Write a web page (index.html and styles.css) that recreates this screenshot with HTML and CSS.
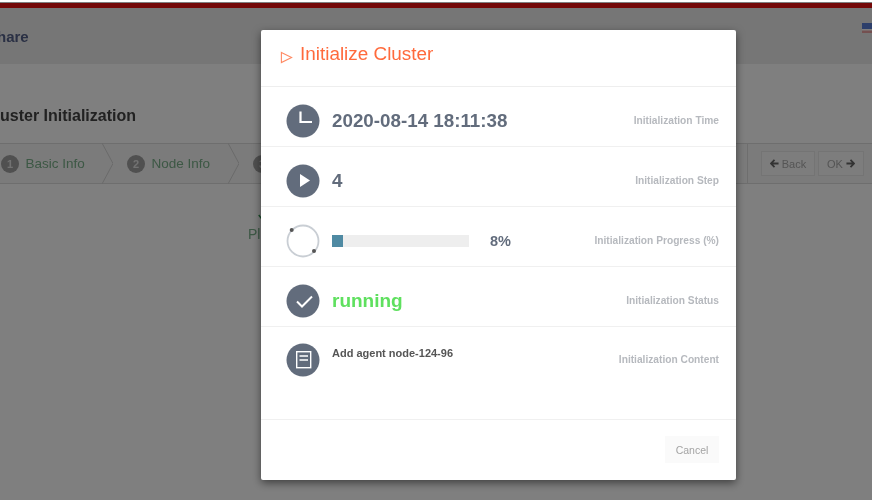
FILE: index.html
```html
<!DOCTYPE html>
<html lang="en">
<head>
  <meta charset="UTF-8" />
  <title>Cluster Initialization</title>
  <link rel="stylesheet" href="styles.css">
</head>
<body>
<div class="page">
  <div class="redbar"></div>
  <header class="topbar">
    <span class="brand">Share</span>
    <svg class="flag" viewBox="0 0 10 10"><rect width="10" height="10" fill="#e8a0a0"/><rect y="6" width="10" height="1.5" fill="#fff"/><rect width="10" height="6" fill="#5b7fd6"/></svg>
  </header>
  <main class="content">
    <h1 class="page-title">Cluster Initialization</h1>
    <div class="wizard">
      <div class="steps">
        <div class="step"><span class="num">1</span>Basic Info<svg class="chevron" viewBox="0 0 11 41"><path d="M0 0 L11 20.5 L0 41" fill="none" stroke="#d4d4d4"/></svg></div>
        <div class="step"><span class="num">2</span>Node Info<svg class="chevron" viewBox="0 0 11 41"><path d="M0 0 L11 20.5 L0 41" fill="none" stroke="#d4d4d4"/></svg></div>
        <div class="step"><span class="num">3</span>Plan</div>
      </div>
      <div class="wizard-actions">
        <button class="btn btn-back"><svg class="arrow" viewBox="0 0 10 10"><path d="M5 1 L1 5 L5 9 M1.5 5 H9.5" fill="none" stroke="#666" stroke-width="2"/></svg>Back</button>
        <button class="btn btn-ok">OK<svg class="arrow" viewBox="0 0 10 10"><path d="M5 1 L9 5 L5 9 M8.5 5 H0.5" fill="none" stroke="#666" stroke-width="2"/></svg></button>
      </div>
    </div>
    <div class="plan">
      <svg class="plan-tick" viewBox="0 0 8 6"><path d="M1 1 L4 5 L7 1" fill="none" stroke="#2f9a4f" stroke-width="1.8"/></svg>
      <div>Plan</div>
    </div>
  </main>
</div>

<div class="overlay"></div>

<div class="modal">
  <div class="modal-head">
    <svg class="head-icon" viewBox="0 0 14 14"><path d="M1.5 1.5 L12.5 7 L1.5 12.5 Z" fill="none" stroke="#ff8a64" stroke-width="1.2"/></svg>
    <span>Initialize Cluster</span>
  </div>

  <div class="row">
    <svg class="icon" viewBox="0 0 34 34"><circle cx="17" cy="17" r="16.5" fill="#626c7c"/><path d="M14.5 7.5 V18 H26" fill="none" stroke="#fff" stroke-width="2.2"/></svg>
    <div class="value">2020-08-14 18:11:38</div>
    <div class="label">Initialization Time</div>
  </div>
  <div class="row">
    <svg class="icon" viewBox="0 0 34 34"><circle cx="17" cy="17" r="16.5" fill="#626c7c"/><path d="M14 10 L24 16.5 L14 23 Z" fill="#fff"/></svg>
    <div class="value">4</div>
    <div class="label">Initialization Step</div>
  </div>
  <div class="row">
    <svg class="icon" viewBox="0 0 34 34"><circle cx="17" cy="17" r="15.5" fill="none" stroke="#c9ced4" stroke-width="1.8"/><circle cx="5.7" cy="6" r="2" fill="#555"/><circle cx="28" cy="27" r="2" fill="#555"/></svg>
    <div class="progress"><div class="progress-fill" style="width: 8%"></div></div>
    <div class="percent">8%</div>
    <div class="label">Initialization Progress (%)</div>
  </div>
  <div class="row">
    <svg class="icon" viewBox="0 0 34 34"><circle cx="17" cy="17" r="16.5" fill="#626c7c"/><path d="M11 17.5 L16 22.5 L26 12.5" fill="none" stroke="#fff" stroke-width="2"/></svg>
    <div class="value running">running</div>
    <div class="label">Initialization Status</div>
  </div>
  <div class="row row-content">
    <svg class="icon" viewBox="0 0 34 34"><circle cx="17" cy="17" r="16.5" fill="#626c7c"/><rect x="10.7" y="8.7" width="14" height="16" fill="none" stroke="#fff" stroke-width="1.4"/><path d="M13.5 13 H22 M13.5 17 H22" stroke="#fff" stroke-width="1.4"/></svg>
    <div class="text">Add agent node-124-96</div>
    <div class="label">Initialization Content</div>
  </div>

  <div class="modal-foot">
    <button class="cancel">Cancel</button>
  </div>
</div>
</body>
</html>
```

FILE: styles.css
```css
* {
  box-sizing: border-box;
}
html, body {
  height: 100%;
}
body {
  margin: 0;
  font-family: "Liberation Sans", Arial, sans-serif;
  background: #fefefe;
  overflow: hidden;
  filter: blur(0.4px);
}
.page {
  padding-top: 3px;
}
.redbar {
  height: 5px;
  background: #e81010;
}
.topbar {
  height: 56px;
  background: #ececec;
  display: flex;
  align-items: center;
  justify-content: space-between;
}
.brand {
  font-size: 15px;
  font-weight: 700;
  color: #546088;
  margin-left: -13px;
}
.flag {
  width: 10px;
  height: 10px;
  margin-top: -17px;
}
.page-title {
  font-size: 16px;
  font-weight: 700;
  color: #444;
  margin: 0 0 0 -16px;
  height: 79px;
  padding-top: 43px;
}
.wizard {
  display: flex;
  justify-content: space-between;
  height: 41px;
  background: #f6f6f6;
  border-top: 1px solid #dcdcdc;
  border-bottom: 1px solid #dcdcdc;
}
.steps {
  display: flex;
}
.step {
  display: flex;
  align-items: center;
  width: 126px;
  padding-left: 1px;
  font-size: 13.5px;
  color: #7ab08a;
}
.num {
  width: 18px;
  height: 18px;
  margin-right: 6.5px;
  border-radius: 50%;
  background: #a0a0a0;
  color: #e4e4e4;
  font-size: 11px;
  font-weight: 700;
  text-align: center;
  line-height: 18px;
}
.chevron {
  width: 11px;
  height: 41px;
  margin-left: auto;
  margin-right: 13px;
}
.wizard-actions {
  display: flex;
  align-items: center;
  gap: 3px;
  width: 125px;
  padding-left: 13px;
  border-left: 1px solid #dcdcdc;
}
.btn {
  display: flex;
  align-items: center;
  justify-content: center;
  gap: 3px;
  height: 25px;
  padding: 0;
  background: #fafafa;
  border: 1px solid #e8e8e8;
  font: 11px "Liberation Sans", Arial, sans-serif;
  color: #aaa;
}
.btn-back {
  width: 54px;
}
.btn-ok {
  width: 46px;
}
.arrow {
  width: 9px;
  height: 9px;
}
.plan {
  margin: 30px 0 0 248px;
  font-size: 14px;
  color: #7ab08a;
}
.plan-tick {
  display: block;
  width: 6px;
  height: 5px;
  margin: 0 0 7px 10px;
}
.overlay {
  position: fixed;
  top: 2px;
  left: 0;
  right: 0;
  bottom: 0;
  background: rgba(0, 0, 0, 0.5);
}
.modal {
  position: fixed;
  left: 261px;
  top: 30px;
  width: 475px;
  height: 450px;
  background: #fff;
  box-shadow: 0 3px 9px rgba(0, 0, 0, 0.5);
  border-radius: 2px;
}
.modal-head {
  height: 57px;
  display: flex;
  align-items: center;
  gap: 7px;
  padding: 0 0 8px 19px;
  font-size: 18.9px;
  color: #ff6a3c;
  border-bottom: 1px solid #eee;
}
.head-icon {
  width: 13px;
  height: 13px;
  margin-top: 6px;
}
.row {
  height: 60px;
  display: flex;
  align-items: center;
  padding: 8px 17px 0 25px;
  border-bottom: 1px solid #f0f0f0;
}
.icon {
  width: 34px;
  height: 34px;
  flex: none;
  margin-right: 12px;
}
.value {
  font-size: 18.8px;
  font-weight: 700;
  color: #626c7c;
}
.running {
  font-size: 19px;
  color: #5fe05f;
}
.label {
  margin-left: auto;
  font-size: 10.2px;
  font-weight: 700;
  color: #b6b9be;
}
.progress {
  width: 137px;
  height: 12px;
  background: #eee;
}
.progress-fill {
  height: 100%;
  background: #4f8aa3;
}
.percent {
  margin-left: 21px;
  font-size: 14.5px;
  font-weight: 700;
  color: #626c7c;
}
.row-content {
  height: 93px;
  align-items: flex-start;
  padding-top: 16px;
}
.row-content .label {
  margin-top: 11px;
}
.text {
  font-size: 11px;
  font-weight: 700;
  color: #555;
  margin-top: 4px;
}
.modal-foot {
  display: flex;
  justify-content: flex-end;
  padding: 16px 17px 0 0;
}
.cancel {
  width: 54px;
  height: 27px;
  background: #fafafa;
  border: none;
  font: 10.5px "Liberation Sans", Arial, sans-serif;
  color: #a4a4a4;
}
```
